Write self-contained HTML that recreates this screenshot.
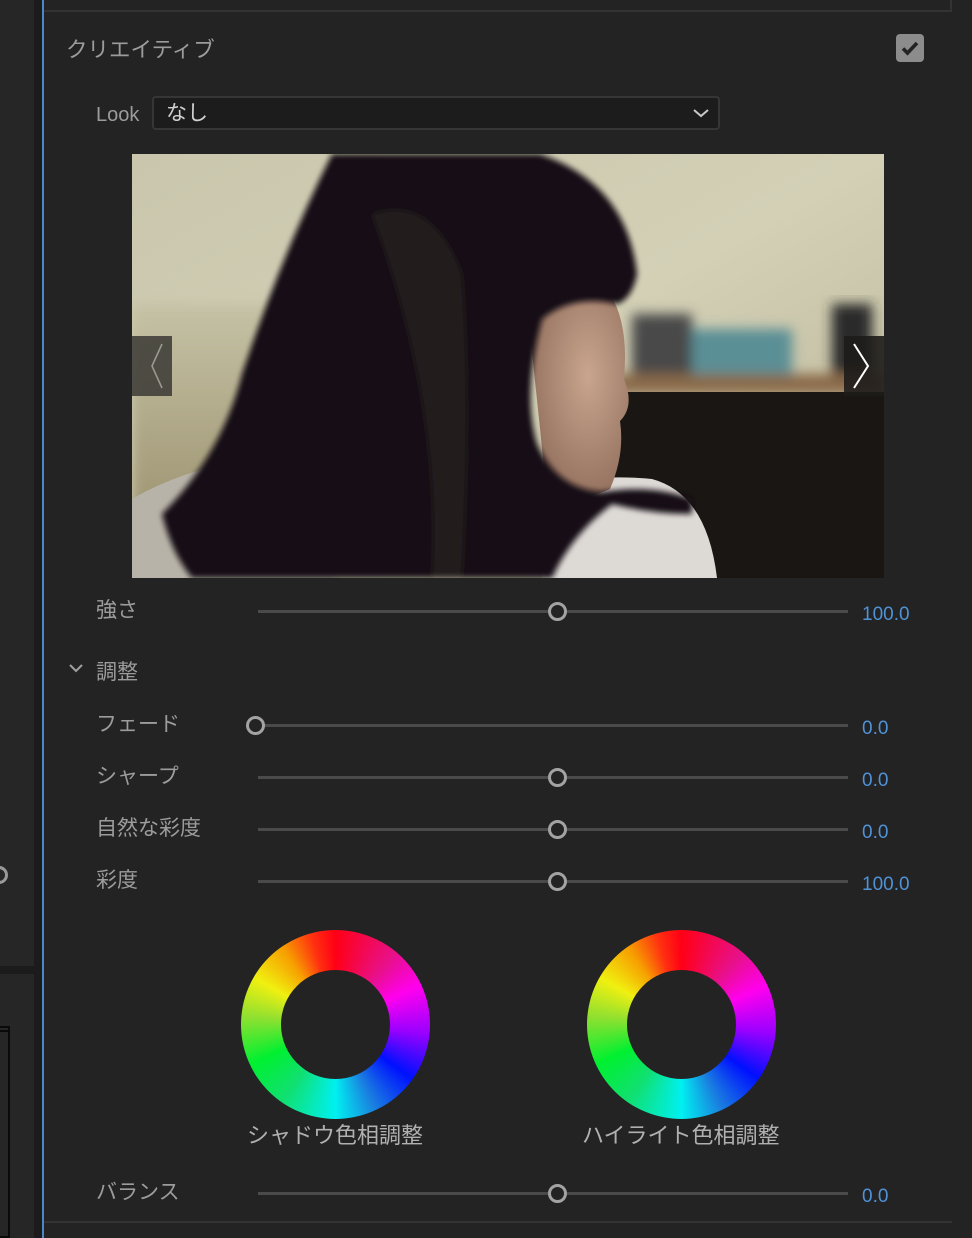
<!DOCTYPE html>
<html><head><meta charset="utf-8"><style>
*{margin:0;padding:0;box-sizing:border-box}
body{width:972px;height:1238px;background:#232323;position:relative;overflow:hidden;font-family:"Liberation Sans","Noto Sans CJK JP",sans-serif;color:#a0a0a0}
.a{position:absolute}
.lbl{position:absolute;font-size:21px;color:#9c9c9c;line-height:1}
.trk{position:absolute;height:3px;background:#4a4a4a;left:258px;width:590px}
.knob{position:absolute;width:19px;height:19px;border-radius:50%;border:3px solid #a3a3a3;background:#232323}
.val{position:absolute;left:862px;font-size:19px;color:#4f92d6;line-height:1}
.wheel{position:absolute;width:189px;height:189px;border-radius:50%;background:conic-gradient(#ff0015 0deg,#e8108a 40deg,#ff00ee 65deg,#9c00ff 95deg,#0010ff 125deg,#1a80e0 155deg,#00f0f0 180deg,#10e070 215deg,#00f030 245deg,#90e030 275deg,#f0f010 300deg,#f7a000 325deg,#ff3010 345deg,#ff0015 360deg)}
.wheel::after{content:"";position:absolute;left:40px;top:40px;width:109px;height:109px;border-radius:50%;background:#232323}
.wl{position:absolute;font-size:22px;color:#b0b0b0;line-height:1;white-space:nowrap}
</style></head><body>
<div class="a" style="left:0;top:0;width:34px;height:1238px;background:#262626"></div>
<div class="a" style="left:0;top:966px;width:34px;height:8px;background:#1b1b1b"></div>
<div class="a" style="left:0;top:1026px;width:10px;height:212px;border:2px solid #0a0a0a;border-left:none"></div>
<div class="a" style="left:0;top:1030px;width:8px;height:2px;background:#0a0a0a"></div>
<div class="a" style="left:-10px;top:866px;width:18px;height:18px;border-radius:50%;border:3px solid #999"></div>
<div class="a" style="left:34px;top:0;width:8px;height:1238px;background:#1b1b1b"></div>
<div class="a" style="left:42px;top:0;width:2px;height:1238px;background:#4b87cc"></div>
<div class="a" style="left:44px;top:10px;width:908px;height:2px;background:#333"></div>
<div class="a" style="left:950px;top:0;width:2px;height:12px;background:#333"></div>
<div class="a" style="left:44px;top:1221px;width:908px;height:2px;background:#333"></div>

<div class="a" style="left:66px;top:40px;font-size:21.5px;color:#9c9c9c;line-height:1">クリエイティブ</div>
<div class="a" style="left:896px;top:34px;width:28px;height:28px;border-radius:4px;background:#8c8c8c">
<svg width="28" height="28" viewBox="0 0 28 28"><path d="M7 14.5l4.5 4.5L21 9" stroke="#232323" stroke-width="3.6" fill="none"/></svg></div>

<div class="a" style="left:96px;top:105px;font-size:20px;color:#9c9c9c;line-height:1">Look</div>
<div class="a" style="left:152px;top:96px;width:568px;height:34px;background:#1c1c1c;border:2px solid #363636;border-radius:4px"></div>
<div class="a" style="left:166px;top:103px;font-size:21px;color:#d0d0d0;line-height:1">なし</div>
<svg class="a" style="left:692px;top:106px" width="18" height="14" viewBox="0 0 18 14"><path d="M2 4l7 6 7-6" stroke="#c8c8c8" stroke-width="2" fill="none"/></svg>

<svg class="a" style="left:132px;top:154px" width="752" height="424" viewBox="0 0 752 424">
<defs>
<linearGradient id="wall" x1="0" y1="0" x2="1" y2="1"><stop offset="0" stop-color="#c9c6ad"/><stop offset="0.5" stop-color="#d3d0b6"/><stop offset="1" stop-color="#b9b497"/></linearGradient>
<linearGradient id="wl" x1="0" y1="0" x2="0" y2="1"><stop offset="0" stop-color="#c6c2a6"/><stop offset="1" stop-color="#938863"/></linearGradient>
<radialGradient id="face" cx="0.6" cy="0.4" r="0.7"><stop offset="0" stop-color="#c9a58e"/><stop offset="1" stop-color="#8c6a58"/></radialGradient>
<filter id="bl"><feGaussianBlur stdDeviation="6"/></filter>
<filter id="bl2"><feGaussianBlur stdDeviation="3"/></filter>
</defs>
<rect width="752" height="424" fill="url(#wall)"/>
<rect x="0" y="150" width="200" height="274" fill="url(#wl)" filter="url(#bl)"/>
<g filter="url(#bl)">
<rect x="480" y="220" width="272" height="20" fill="#8a6a4a"/>
<rect x="560" y="175" width="100" height="45" fill="#5a8f95"/>
<rect x="500" y="160" width="60" height="60" fill="#4a4a48"/>
<rect x="700" y="150" width="40" height="70" fill="#2a2a2a"/>
</g>
<rect x="480" y="238" width="272" height="186" fill="#1a1613"/>
<path d="M0 424L0 345Q60 310 150 300L200 424Z" fill="#b8b3a8"/>
<path d="M420 330Q470 320 520 325Q575 340 585 424L410 424Z" fill="#ddd9d5"/>
<path d="M395 150Q430 135 478 140Q497 170 492 225Q503 252 488 267Q493 300 478 335Q445 350 415 342Z" fill="url(#face)"/>
<g filter="url(#bl2)">
<path d="M200 0L408 0Q495 30 505 120Q500 145 485 150Q440 140 410 165Q390 240 405 290Q425 335 470 338Q520 330 560 345L560 360Q520 360 480 350Q440 380 420 424L60 424Q40 400 30 360Q90 300 110 220Q150 100 200 0Z" fill="#151112"/>
<path d="M240 60Q300 40 330 120Q340 250 330 424L300 424Q310 250 240 60Z" fill="#2a2320" opacity="0.6"/>
</g>
<rect x="0" y="182" width="40" height="60" fill="#3a3834" opacity="0.85"/>
<path d="M30 190L20 212L30 234" stroke="#9a9890" stroke-width="1.6" fill="none"/>
<rect x="712" y="182" width="40" height="60" fill="#1e1c1a" opacity="0.9"/>
<path d="M722 190L736 212L722 234" stroke="#fff" stroke-width="2" fill="none"/>
</svg>

<div class="lbl" style="left:96px;top:600px">強さ</div>
<div class="trk" style="top:610px"></div><div class="knob" style="left:548px;top:602px"></div>
<div class="val" style="top:605px">100.0</div>

<svg class="a" style="left:68px;top:662px" width="16" height="12" viewBox="0 0 16 12"><path d="M2 3l6 6 6-6" stroke="#a0a0a0" stroke-width="2" fill="none"/></svg>
<div class="lbl" style="left:96px;top:662px">調整</div>

<div class="lbl" style="left:96px;top:714px">フェード</div>
<div class="trk" style="top:724px"></div><div class="knob" style="left:246px;top:716px"></div>
<div class="val" style="top:719px">0.0</div>

<div class="lbl" style="left:96px;top:766px">シャープ</div>
<div class="trk" style="top:776px"></div><div class="knob" style="left:548px;top:768px"></div>
<div class="val" style="top:771px">0.0</div>

<div class="lbl" style="left:96px;top:818px">自然な彩度</div>
<div class="trk" style="top:828px"></div><div class="knob" style="left:548px;top:820px"></div>
<div class="val" style="top:823px">0.0</div>

<div class="lbl" style="left:96px;top:870px">彩度</div>
<div class="trk" style="top:880px"></div><div class="knob" style="left:548px;top:872px"></div>
<div class="val" style="top:875px">100.0</div>

<div class="wheel" style="left:241px;top:930px"></div>
<div class="wheel" style="left:587px;top:930px"></div>
<div class="wl" style="left:247px;top:1125px">シャドウ色相調整</div>
<div class="wl" style="left:582px;top:1125px">ハイライト色相調整</div>

<div class="lbl" style="left:96px;top:1182px">バランス</div>
<div class="trk" style="top:1192px"></div><div class="knob" style="left:548px;top:1184px"></div>
<div class="val" style="top:1187px">0.0</div>
</body></html>
